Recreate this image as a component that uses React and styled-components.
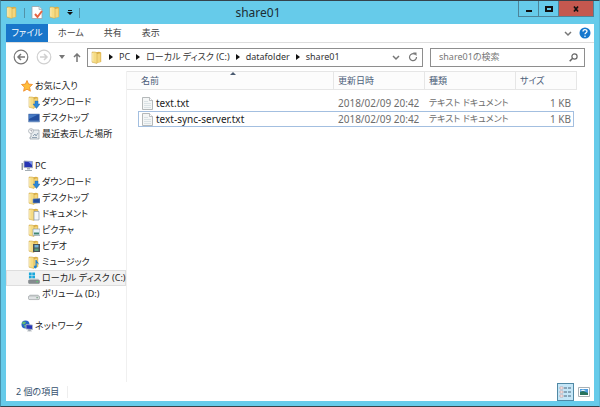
import React, { useState } from 'react';
import styled, { createGlobalStyle } from 'styled-components';

const GlobalStyle = createGlobalStyle`
  * {
    box-sizing: border-box;
  }
  body {
    margin: 0;
    font-family: "Noto Sans", "Noto Sans CJK JP", sans-serif;
    font-feature-settings: "palt", "kern";
    font-size: 9px;
    line-height: 16px;
    color: #222;
  }
  button,
  input {
    font: inherit;
    font-feature-settings: inherit;
  }
  svg {
    display: block;
    flex: none;
  }
`;

const Window = styled.div`
  display: flex;
  flex-direction: column;
  min-height: 100vh;
  padding: 0 5px 5px;
  background-color: #66cbea;
  border: 1px solid #34434c;
  border-left-color: #4692ac;
  border-right-color: #5ab8d6;
`;

const TitleBar = styled.header`
  display: flex;
  height: 23px;
`;

const QuickAccess = styled.div`
  display: flex;
  align-items: center;
  gap: 6px;
  width: 86px;
`;

const PlainButton = styled.button`
  display: flex;
  align-items: center;
  justify-content: center;
  padding: 0;
  border: none;
  background: none;
  color: #777;
  cursor: pointer;
`;

const QuickDivider = styled.span`
  width: 1px;
  height: 10px;
  background-color: #5293a8;
`;

const Title = styled.h1`
  flex: 1;
  margin: 0;
  padding-right: 94px;
  font-size: 12px;
  font-weight: 400;
  line-height: 24px;
  text-align: center;
  color: #1c2c33;
`;

const Controls = styled.div`
  display: flex;
  height: 16px;
`;

const ControlButton = styled.button`
  display: flex;
  align-items: center;
  justify-content: center;
  width: ${(props) => (props.$close ? 36 : 20)}px;
  padding: 0;
  border: 1px solid #4d8499;
  border-top: none;
  border-right-width: ${(props) => (props.$close ? 1 : 0)}px;
  background-color: ${(props) => (props.$close ? '#c4584f' : '#66cbea')};
  color: #111;
`;

const Content = styled.div`
  display: flex;
  flex: 1;
  flex-direction: column;
  background-color: #fff;
`;

const Ribbon = styled.nav`
  display: flex;
  align-items: center;
  height: 19px;
  border-bottom: 1px solid #ddd;
`;

const Tab = styled.button`
  height: 18px;
  padding: 0 10px;
  border: none;
  background-color: #fff;
  line-height: 18px;
  color: #444;
`;

const FileTab = styled(Tab)`
  width: 42px;
  padding: 0;
  background-color: #1976ca;
  color: #fff;
`;

const RibbonTools = styled.div`
  display: flex;
  align-items: center;
  gap: 7px;
  margin-left: auto;
  padding-right: 3px;
`;

const Toolbar = styled.div`
  display: flex;
  align-items: center;
  height: 28px;
  padding: 0 9px 0 7px;
`;

const History = styled.div`
  display: flex;
  align-items: center;
  gap: 7px;
  width: 74px;
`;

const AddressBar = styled.div`
  display: flex;
  flex: 1;
  align-items: center;
  height: 19px;
  padding: 0 4px 0 3px;
  border: 1px solid #8e8e8e;
`;

const Crumbs = styled.ol`
  display: flex;
  flex: 1;
  margin: 0;
  padding: 0;
  list-style: none;
`;

const Crumb = styled.li`
  display: flex;
  align-items: center;
  gap: 6px;
  padding-left: 6px;
`;

const CrumbLink = styled.a`
  color: #333;
  text-decoration: none;
`;

const AddressTools = styled.div`
  display: flex;
  align-items: center;
  gap: 8px;
`;

const SearchBox = styled.label`
  display: flex;
  align-items: center;
  width: 155px;
  height: 19px;
  margin-left: 7px;
  padding: 0 6px 0 8px;
  border: 1px solid #8e8e8e;
  color: #666;
`;

const SearchInput = styled.input`
  flex: 1;
  min-width: 0;
  padding: 0;
  border: none;
  outline: none;
  background: none;
  &::placeholder {
    color: #777;
    opacity: 1;
  }
`;

const Body = styled.div`
  display: flex;
  flex: 1;
`;

const Sidebar = styled.nav`
  width: 121px;
  padding-top: 7px;
  border-right: 1px solid #f0f0f0;
`;

const Group = styled.ul`
  margin: 0 0 16px;
  padding: 0;
  list-style: none;
`;

const TreeLink = styled.a`
  display: flex;
  align-items: center;
  gap: 2px;
  height: 16px;
  padding-left: ${(props) => (props.$root ? 14 : 21)}px;
  border: 1px solid ${(props) => (props.$active ? '#dedede' : 'transparent')};
  background-color: ${(props) => (props.$active ? '#f2f2f2' : 'transparent')};
  line-height: 14px;
  color: #222;
  text-decoration: none;
  white-space: nowrap;
`;

const FilePane = styled.main`
  flex: 1;
  padding-right: 17px;
`;

const FileTable = styled.table`
  width: 100%;
  border-collapse: separate;
  border-spacing: 0;
  table-layout: fixed;
`;

const HeadCell = styled.th`
  position: relative;
  height: 19px;
  padding: 0 0 0 ${(props) => (props.$first ? 14 : 4)}px;
  border: solid #e6e6e6;
  border-width: 1px 1px 1px 0;
  background-color: #fcfcfc;
  font-weight: 400;
  line-height: 17px;
  text-align: left;
  color: #4c607a;
`;

const SortArrow = styled.span`
  position: absolute;
  top: 0;
  left: 50%;
  border: 3px solid transparent;
  border-top-width: 0;
  border-bottom-color: #4a5a70;
`;

const GapCell = styled.td`
  height: ${(props) => props.$height}px;
  padding: 0;
`;

const FileRow = styled.tr`
  --edge: ${(props) => (props.$selected ? '#a3bfe0' : 'transparent')};
`;

const Cell = styled.td`
  height: 16px;
  padding: 0 2px 0 4px;
  border: solid var(--edge);
  border-width: 1px 0;
  font-size: ${(props) => (props.$small ? 9 : 10)}px;
  line-height: 14px;
  text-align: ${(props) => (props.$right ? 'right' : 'left')};
  color: #6d6d6d;
  white-space: nowrap;
  &:nth-child(2) {
    border-left-width: 1px;
    padding-left: 3px;
    color: #222;
  }
  &:nth-child(5) {
    border-right-width: 1px;
  }
`;

const FileName = styled.span`
  display: flex;
  align-items: center;
  gap: 3px;
`;

const StatusBar = styled.footer`
  display: flex;
  align-items: center;
  height: 19px;
  padding: 0 2px 0 10px;
  color: #35516d;
`;

const ItemCount = styled.span`
  padding-right: 8px;
  border-right: 1px solid #eee;
  line-height: 12px;
`;

const ViewButtons = styled.div`
  display: flex;
  gap: 1px;
  margin-left: auto;
`;

const ViewButton = styled.button`
  display: flex;
  align-items: center;
  justify-content: center;
  width: 17px;
  height: 18px;
  padding: 0;
  border: 1px solid ${(props) => (props.$on ? '#5089a5' : 'transparent')};
  background-color: ${(props) => (props.$on ? '#c5e6f7' : 'transparent')};
`;

const badges = {
  download: <path d="M7 5h3v3h2L8.500 12.500 5 8h2z" fill="#2b86d8" stroke="#1768b0" strokeWidth=".4" />,
  desktop: <path d="M5 7l7-.5V11H5z" fill="#244f9e" stroke="#7894bd" strokeWidth=".6" />,
  document: <path d="M6 3.500h5V12H6z" fill="#f4f7fa" stroke="#8b99a8" strokeWidth=".7" />,
  picture: (
    <g>
      <path d="M5 5h7v6.500H5z" fill="#e7f3fb" stroke="#8497a5" strokeWidth=".6" />
      <path d="M6 8.500h5v2H6z" fill="#3f8572" />
    </g>
  ),
  video: (
    <g>
      <path d="M5 4h7v8H5z" fill="#4b5256" />
      <path d="M6.500 5h4v2.500h-4z" fill="#71b4d9" />
      <path d="M6.500 8.500h4V11h-4z" fill="#579c7a" />
    </g>
  ),
  music: (
    <g fill="#2080cf">
      <path d="M7.500 4h1.200c0 2 2.500 2.500 2 5-.5-1.500-1.300-1.800-2-2v4h-1.200z" />
      <circle cx="7.300" cy="11" r="1.400" />
    </g>
  ),
};

function FolderIcon({ badge }) {
  return (
    <svg width="12" height="13" viewBox="0 0 12 13">
      <path d="M4 1.500l4-.8 2.200.8V11L5 12z" fill="#d9ad45" />
      <path d="M6 3l3.500-.7V11L6 11.800z" fill="#f4d67c" />
      <path d="M1 1h3.200L6 2.200v10.300L1 11.200z" fill="#f6dc84" stroke="#cba342" strokeWidth=".5" />
      <path d="M1.800 2v8.500" stroke="#fff6cd" strokeWidth=".8" />
      {badges[badge]}
    </svg>
  );
}

function StarIcon() {
  return (
    <svg width="12" height="12" viewBox="0 0 12 12">
      <path
        d="M6 .5l1.600 3.600 3.900.4-2.900 2.700.8 4L6 9.200l-3.400 2 .8-4L.5 4.500l3.900-.4z"
        fill="#ffbe3d"
        stroke="#ee8625"
        strokeWidth=".8"
      />
    </svg>
  );
}

function DesktopIcon() {
  return (
    <svg width="12" height="12" viewBox="0 0 12 12">
      <path d="M.5 2h11v8H.5z" fill="#234f9f" stroke="#7f9bc0" strokeWidth=".6" />
      <path d="M1 2.500h9L1 7z" fill="#477bc5" />
      <path d="M1 9.200h10" stroke="#8fb3da" strokeWidth=".7" />
    </svg>
  );
}

function RecentIcon() {
  return (
    <svg width="12" height="12" viewBox="0 0 12 12">
      <path d="M3 2h8v9H2V9h1z" fill="#e8ecef" stroke="#919ba3" strokeWidth=".7" />
      <path d="M5 8l2-2 1 2 2-3M4 9.500h5" stroke="#7b91a2" fill="none" strokeWidth=".8" />
      <circle cx="3" cy="3" r="2.400" fill="#fff" stroke="#99a2a9" strokeWidth=".7" />
      <path d="M3 1.500V3h1.200" stroke="#667" fill="none" strokeWidth=".6" />
    </svg>
  );
}

function PcIcon() {
  return (
    <svg width="12" height="12" viewBox="0 0 12 12">
      <path d="M.5 3H2v7H.5z" fill="#8e999f" />
      <path d="M3 1l8.500.5v6.300L3 7.500z" fill="#2635b4" stroke="#a7b0b8" strokeWidth=".9" />
      <path d="M7 1.500h4V5z" fill="#7991ee" />
      <path d="M6 8h3v1.500H6zM4 10h7v1H4z" fill="#a3adb4" />
    </svg>
  );
}

function DriveIcon({ system }) {
  return (
    <svg width="12" height="13" viewBox="0 0 13 13">
      {system && <path d="M1 0h3v3H1zM4.600 0h3v3h-3zM1 3.600h3v2.900H1zM4.600 3.600h3v2.900h-3z" fill="#1ba8db" />}
      <path d="M2 6.500h9L12.500 9H.5z" fill="#d4d8da" />
      <path
        d="M.5 9Q.5 8 2 8h9q1.500 0 1.500 1v2q0 1-1.500 1H2q-1.500 0-1.500-1z"
        fill={system ? '#858b8f' : '#dfe2e4'}
        stroke="#74797c"
        strokeWidth=".5"
      />
      <path d="M9 10h2" stroke={system ? '#54e06d' : '#6f9c79'} />
    </svg>
  );
}

function NetworkIcon() {
  return (
    <svg width="12" height="12" viewBox="0 0 12 12">
      <circle cx="4.500" cy="4.500" r="4" fill="#2765c7" />
      <path d="M2 1.500l3 .5-1 2-2 .5L1 3zM3 5h2l-1 3z" fill="#62bd71" />
      <path d="M5 4.500l6.500.5v4.500L5 9z" fill="#2737b9" stroke="#b1bbc5" strokeWidth=".8" />
      <path d="M7.500 9.500h2v1.300h-2zM6 11h5" fill="#98a2a9" stroke="#98a2a9" strokeWidth=".5" />
    </svg>
  );
}

function TextFileIcon() {
  return (
    <svg width="11" height="13" viewBox="0 0 11 13">
      <path d="M.5.5h7l3 3v9H.5z" fill="#f4f6f6" stroke="#a3a8aa" strokeWidth=".8" />
      <path d="M7.500.5v3h3" fill="#fff" stroke="#a3a8aa" strokeWidth=".7" />
      <path d="M2 4.500h4M2 6.500h7M2 8.500h7M2 10.500h7" stroke="#d3dde1" strokeWidth=".8" />
    </svg>
  );
}

function Arrow({ d, width = 8, height = 8, stroke = 1.5 }) {
  return (
    <svg width={width} height={height} viewBox={`0 0 ${width} ${height}`}>
      <path d={d} fill="none" stroke="currentColor" strokeWidth={stroke} />
    </svg>
  );
}

function RoundArrow({ back }) {
  const color = back ? '#777' : '#d0d0d0';
  return (
    <svg width="16" height="16" viewBox="0 0 16 16" fill="none" stroke={color}>
      <circle cx="8" cy="8" r="6.800" strokeWidth="1.200" />
      <path d={back ? 'M12 8H5M8 5L5 8l3 3' : 'M4 8h7M8 5l3 3-3 3'} strokeWidth="1.500" />
    </svg>
  );
}

const favorites = [
  { name: 'お気に入り', icon: <StarIcon />, root: true },
  { name: 'ダウンロード', icon: <FolderIcon badge="download" /> },
  { name: 'デスクトップ', icon: <DesktopIcon /> },
  { name: '最近表示した場所', icon: <RecentIcon /> },
];

const computer = [
  { name: 'PC', icon: <PcIcon />, root: true },
  { name: 'ダウンロード', icon: <FolderIcon badge="download" /> },
  { name: 'デスクトップ', icon: <FolderIcon badge="desktop" /> },
  { name: 'ドキュメント', icon: <FolderIcon badge="document" /> },
  { name: 'ピクチャ', icon: <FolderIcon badge="picture" /> },
  { name: 'ビデオ', icon: <FolderIcon badge="video" /> },
  { name: 'ミュージック', icon: <FolderIcon badge="music" /> },
  { name: 'ローカル ディスク (C:)', icon: <DriveIcon system />, active: true },
  { name: 'ボリューム (D:)', icon: <DriveIcon /> },
];

const network = [{ name: 'ネットワーク', icon: <NetworkIcon />, root: true }];

const crumbs = ['PC', 'ローカル ディスク (C:)', 'datafolder', 'share01'];

const files = [
  { name: 'text.txt', date: '2018/02/09 20:42', type: 'テキスト ドキュメント', size: '1 KB' },
  { name: 'text-sync-server.txt', date: '2018/02/09 20:42', type: 'テキスト ドキュメント', size: '1 KB' },
];

function TreeGroup({ items }) {
  return (
    <Group>
      {items.map((item) => (
        <li key={item.name}>
          <TreeLink href="#" $root={item.root} $active={item.active}>
            {item.icon}
            {item.name}
          </TreeLink>
        </li>
      ))}
    </Group>
  );
}

function App() {
  const [selected, setSelected] = useState('text-sync-server.txt');
  const [query, setQuery] = useState('');

  return (
    <>
      <GlobalStyle />
      <Window>
        <TitleBar>
          <QuickAccess>
            <FolderIcon />
            <QuickDivider />
            <PlainButton aria-label="プロパティ">
              <svg width="12" height="13" viewBox="0 0 12 13">
                <path d="M1 .5h7l3 3v9H1z" fill="#fff" stroke="#99a2a8" strokeWidth=".8" />
                <path d="M8 .5v3h3" fill="#e1e8eb" stroke="#99a2a8" strokeWidth=".6" />
                <path d="M4 8l2.500 3L11 5" fill="none" stroke="#e76542" strokeWidth="2" />
              </svg>
            </PlainButton>
            <PlainButton aria-label="新しいフォルダー">
              <FolderIcon />
            </PlainButton>
            <PlainButton aria-label="カスタマイズ">
              <svg width="6" height="6" viewBox="0 0 6 6">
                <path d="M1 0h4v1H1zM0 2h6L3 5z" fill="#111" />
              </svg>
            </PlainButton>
            <QuickDivider />
          </QuickAccess>
          <Title>share01</Title>
          <Controls>
            <ControlButton aria-label="最小化">
              <Arrow d="M1 6h6" stroke={2} />
            </ControlButton>
            <ControlButton aria-label="最大化">
              <Arrow d="M1 2h6v4H1z" stroke={2} />
            </ControlButton>
            <ControlButton $close aria-label="閉じる">
              <Arrow d="M2 1.500l4 5M6 1.500l-4 5" stroke={1.7} />
            </ControlButton>
          </Controls>
        </TitleBar>
        <Content>
          <Ribbon>
            <FileTab>ファイル</FileTab>
            <Tab>ホーム</Tab>
            <Tab>共有</Tab>
            <Tab>表示</Tab>
            <RibbonTools>
              <PlainButton aria-label="リボンの展開">
                <Arrow d="M1 3l3 3 3-3" />
              </PlainButton>
              <PlainButton aria-label="ヘルプ">
                <svg width="12" height="12" viewBox="0 0 12 12">
                  <circle cx="6" cy="6" r="5.500" fill="#1678ce" />
                  <path d="M4 4.500C4 2 8 2 8 4.300 8 5.800 6 5.700 6 7.300" fill="none" stroke="#fff" strokeWidth="1.300" />
                  <circle cx="6" cy="9.200" r=".8" fill="#fff" />
                </svg>
              </PlainButton>
            </RibbonTools>
          </Ribbon>
          <Toolbar>
            <History>
              <PlainButton aria-label="戻る">
                <RoundArrow back />
              </PlainButton>
              <PlainButton aria-label="進む">
                <RoundArrow />
              </PlainButton>
              <PlainButton aria-label="履歴">
                <svg width="6" height="4" viewBox="0 0 6 4">
                  <path d="M0 0h6L3 4z" fill="#777" />
                </svg>
              </PlainButton>
              <PlainButton aria-label="上へ">
                <Arrow d="M5 9V1M2 4l3-3 3 3" width={10} height={9} />
              </PlainButton>
            </History>
            <AddressBar>
              <FolderIcon />
              <Crumbs>
                {crumbs.map((crumb) => (
                  <Crumb key={crumb}>
                    <svg width="4" height="6" viewBox="0 0 4 6">
                      <path d="M0 0l4 3-4 3z" fill="#111" />
                    </svg>
                    <CrumbLink href="#">{crumb}</CrumbLink>
                  </Crumb>
                ))}
              </Crumbs>
              <AddressTools>
                <PlainButton aria-label="以前の場所">
                  <Arrow d="M1 3l3 3 3-3" />
                </PlainButton>
                <PlainButton aria-label="更新">
                  <svg width="10" height="10" viewBox="0 0 10 10">
                    <path d="M7 2.300A3.500 3.500 0 1 0 8.500 5" fill="none" stroke="#777" strokeWidth="1.200" />
                    <path d="M5 .5h3.500V4z" fill="#777" />
                  </svg>
                </PlainButton>
              </AddressTools>
            </AddressBar>
            <SearchBox>
              <SearchInput
                aria-label="検索"
                placeholder="share01の検索"
                value={query}
                onChange={(e) => setQuery(e.target.value)}
              />
              <svg width="9" height="9" viewBox="0 0 9 9" fill="none" stroke="#666">
                <circle cx="5.500" cy="3.500" r="2.600" strokeWidth="1.200" />
                <path d="M3.700 5.300L.7 8.300" strokeWidth="1.600" />
              </svg>
            </SearchBox>
          </Toolbar>
          <Body>
            <Sidebar>
              <TreeGroup items={favorites} />
              <TreeGroup items={computer} />
              <TreeGroup items={network} />
            </Sidebar>
            <FilePane>
              <FileTable>
                <colgroup>
                  <col width="11" />
                  <col />
                  <col width="91" />
                  <col width="91" />
                  <col width="58" />
                  <col width="3" />
                </colgroup>
                <thead>
                  <tr>
                    <HeadCell $first colSpan={2} aria-sort="ascending">
                      名前
                      <SortArrow />
                    </HeadCell>
                    <HeadCell>更新日時</HeadCell>
                    <HeadCell>種類</HeadCell>
                    <HeadCell colSpan={2}>サイズ</HeadCell>
                  </tr>
                </thead>
                <tbody>
                  <tr>
                    <GapCell colSpan={6} $height={5} />
                  </tr>
                  {files.map((file) => (
                    <FileRow
                      key={file.name}
                      $selected={file.name === selected}
                      onClick={() => setSelected(file.name)}
                    >
                      <GapCell />
                      <Cell>
                        <FileName>
                          <TextFileIcon />
                          {file.name}
                        </FileName>
                      </Cell>
                      <Cell>{file.date}</Cell>
                      <Cell $small>{file.type}</Cell>
                      <Cell $right>{file.size}</Cell>
                      <GapCell />
                    </FileRow>
                  ))}
                </tbody>
              </FileTable>
            </FilePane>
          </Body>
          <StatusBar>
            <ItemCount>2 個の項目</ItemCount>
            <ViewButtons>
              <ViewButton $on aria-label="詳細">
                <svg width="13" height="12" viewBox="0 0 13 12">
                  <path d="M1 1h3v2H1zM1 5h3v2H1zM1 9h3v2H1z" fill="#fff" stroke="#c08989" strokeWidth=".6" />
                  <path d="M5 2h3M9 2h3M5 6h3M9 6h3M5 10h3M9 10h3" stroke="#4b667c" />
                </svg>
              </ViewButton>
              <ViewButton aria-label="大アイコン">
                <svg width="12" height="10" viewBox="0 0 12 10">
                  <path d="M.5.5h11v9H.5z" fill="#fff" stroke="#a9b1b5" />
                  <path d="M2 2h8v6H2z" fill="#4d9bdc" />
                  <path d="M2 5l3-1 5 2v2H2z" fill="#28725c" />
                  <path d="M2 4l3-1.500L8 4z" fill="#e4f4fc" />
                </svg>
              </ViewButton>
            </ViewButtons>
          </StatusBar>
        </Content>
      </Window>
    </>
  );
}

export default App;
